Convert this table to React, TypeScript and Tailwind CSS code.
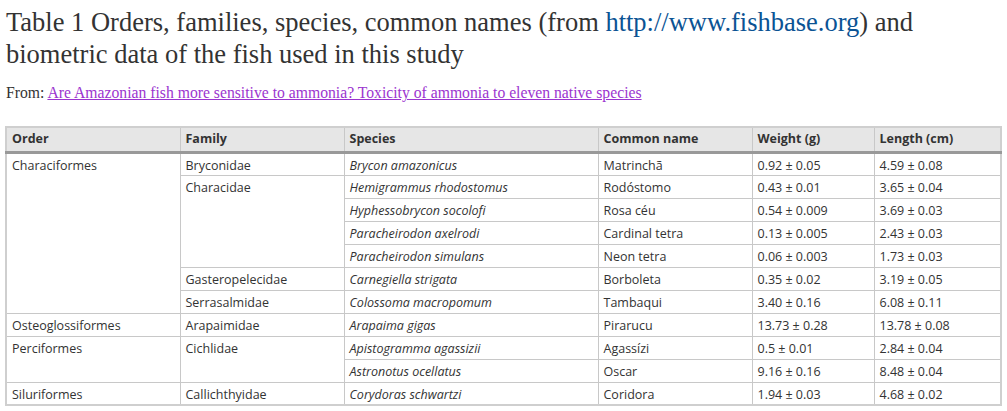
const rows: { order?: [string, number]; family?: [string, number]; species: string; common: string; weight: string; length: string }[] = [
  { order: ['Characiformes', 7], family: ['Bryconidae', 1], species: 'Brycon amazonicus', common: 'Matrinchã', weight: '0.92 ± 0.05', length: '4.59 ± 0.08' },
  { family: ['Characidae', 4], species: 'Hemigrammus rhodostomus', common: 'Rodóstomo', weight: '0.43 ± 0.01', length: '3.65 ± 0.04' },
  { species: 'Hyphessobrycon socolofi', common: 'Rosa céu', weight: '0.54 ± 0.009', length: '3.69 ± 0.03' },
  { species: 'Paracheirodon axelrodi', common: 'Cardinal tetra', weight: '0.13 ± 0.005', length: '2.43 ± 0.03' },
  { species: 'Paracheirodon simulans', common: 'Neon tetra', weight: '0.06 ± 0.003', length: '1.73 ± 0.03' },
  { family: ['Gasteropelecidae', 1], species: 'Carnegiella strigata', common: 'Borboleta', weight: '0.35 ± 0.02', length: '3.19 ± 0.05' },
  { family: ['Serrasalmidae', 1], species: 'Colossoma macropomum', common: 'Tambaqui', weight: '3.40 ± 0.16', length: '6.08 ± 0.11' },
  { order: ['Osteoglossiformes', 1], family: ['Arapaimidae', 1], species: 'Arapaima gigas', common: 'Pirarucu', weight: '13.73 ± 0.28', length: '13.78 ± 0.08' },
  { order: ['Perciformes', 2], family: ['Cichlidae', 2], species: 'Apistogramma agassizii', common: 'Agassízi', weight: '0.5 ± 0.01', length: '2.84 ± 0.04' },
  { species: 'Astronotus ocellatus', common: 'Oscar', weight: '9.16 ± 0.16', length: '8.48 ± 0.04' },
  { order: ['Siluriformes', 1], family: ['Callichthyidae', 1], species: 'Corydoras schwartzi', common: 'Coridora', weight: '1.94 ± 0.03', length: '4.68 ± 0.02' },
];

const td = 'border border-[#c8c8c8] px-[5px] pt-[2px] pb-0 h-[23px] align-top leading-[19px]';
const th = 'border-x border-[#c8c8c8] px-[5px] h-[25px] text-left font-bold align-middle';

export default function App() {
  return (
    <div className="bg-white w-[1007px] h-[411px] overflow-hidden pl-[6px] pr-[4px] text-[#333]">
      <h1 className="font-['Liberation_Serif',serif] text-[26.5px] leading-[32px] pt-[6px] font-normal text-[#333]">
        Table 1 Orders, families, species, common names (from <span className="text-[#0b5394]">http://www.fishbase.org</span>) and biometric data of the fish used in this study
      </h1>
      <p className="font-['Liberation_Serif',serif] text-[15.7px] leading-[20px] mt-[13px]">
        From: <a className="text-[#9b34cf] underline">Are Amazonian fish more sensitive to ammonia? Toxicity of ammonia to eleven native species</a>
      </p>
      <table className="mt-[23px] -ml-[1px] w-[997px] table-fixed border-collapse border-2 border-[#cfcfcf] font-['Open_Sans',sans-serif] text-[12.5px] text-[#333]">
        <colgroup>
          <col className="w-[174px]" />
          <col className="w-[164px]" />
          <col className="w-[254px]" />
          <col className="w-[154px]" />
          <col className="w-[122px]" />
          <col />
        </colgroup>
        <thead>
          <tr className="bg-[#e6e6e6] border-b-[3px] border-[#999]">
            <th className={th}>Order</th>
            <th className={th}>Family</th>
            <th className={th}>Species</th>
            <th className={th}>Common name</th>
            <th className={th}>Weight (g)</th>
            <th className={th}>Length (cm)</th>
          </tr>
        </thead>
        <tbody>
          {rows.map((r, i) => (
            <tr key={i}>
              {r.order && <td className={td} rowSpan={r.order[1]}>{r.order[0]}</td>}
              {r.family && <td className={td} rowSpan={r.family[1]}>{r.family[0]}</td>}
              <td className={td + ' italic'}>{r.species}</td>
              <td className={td}>{r.common}</td>
              <td className={td}>{r.weight}</td>
              <td className={td}>{r.length}</td>
            </tr>
          ))}
        </tbody>
      </table>
    </div>
  );
}
